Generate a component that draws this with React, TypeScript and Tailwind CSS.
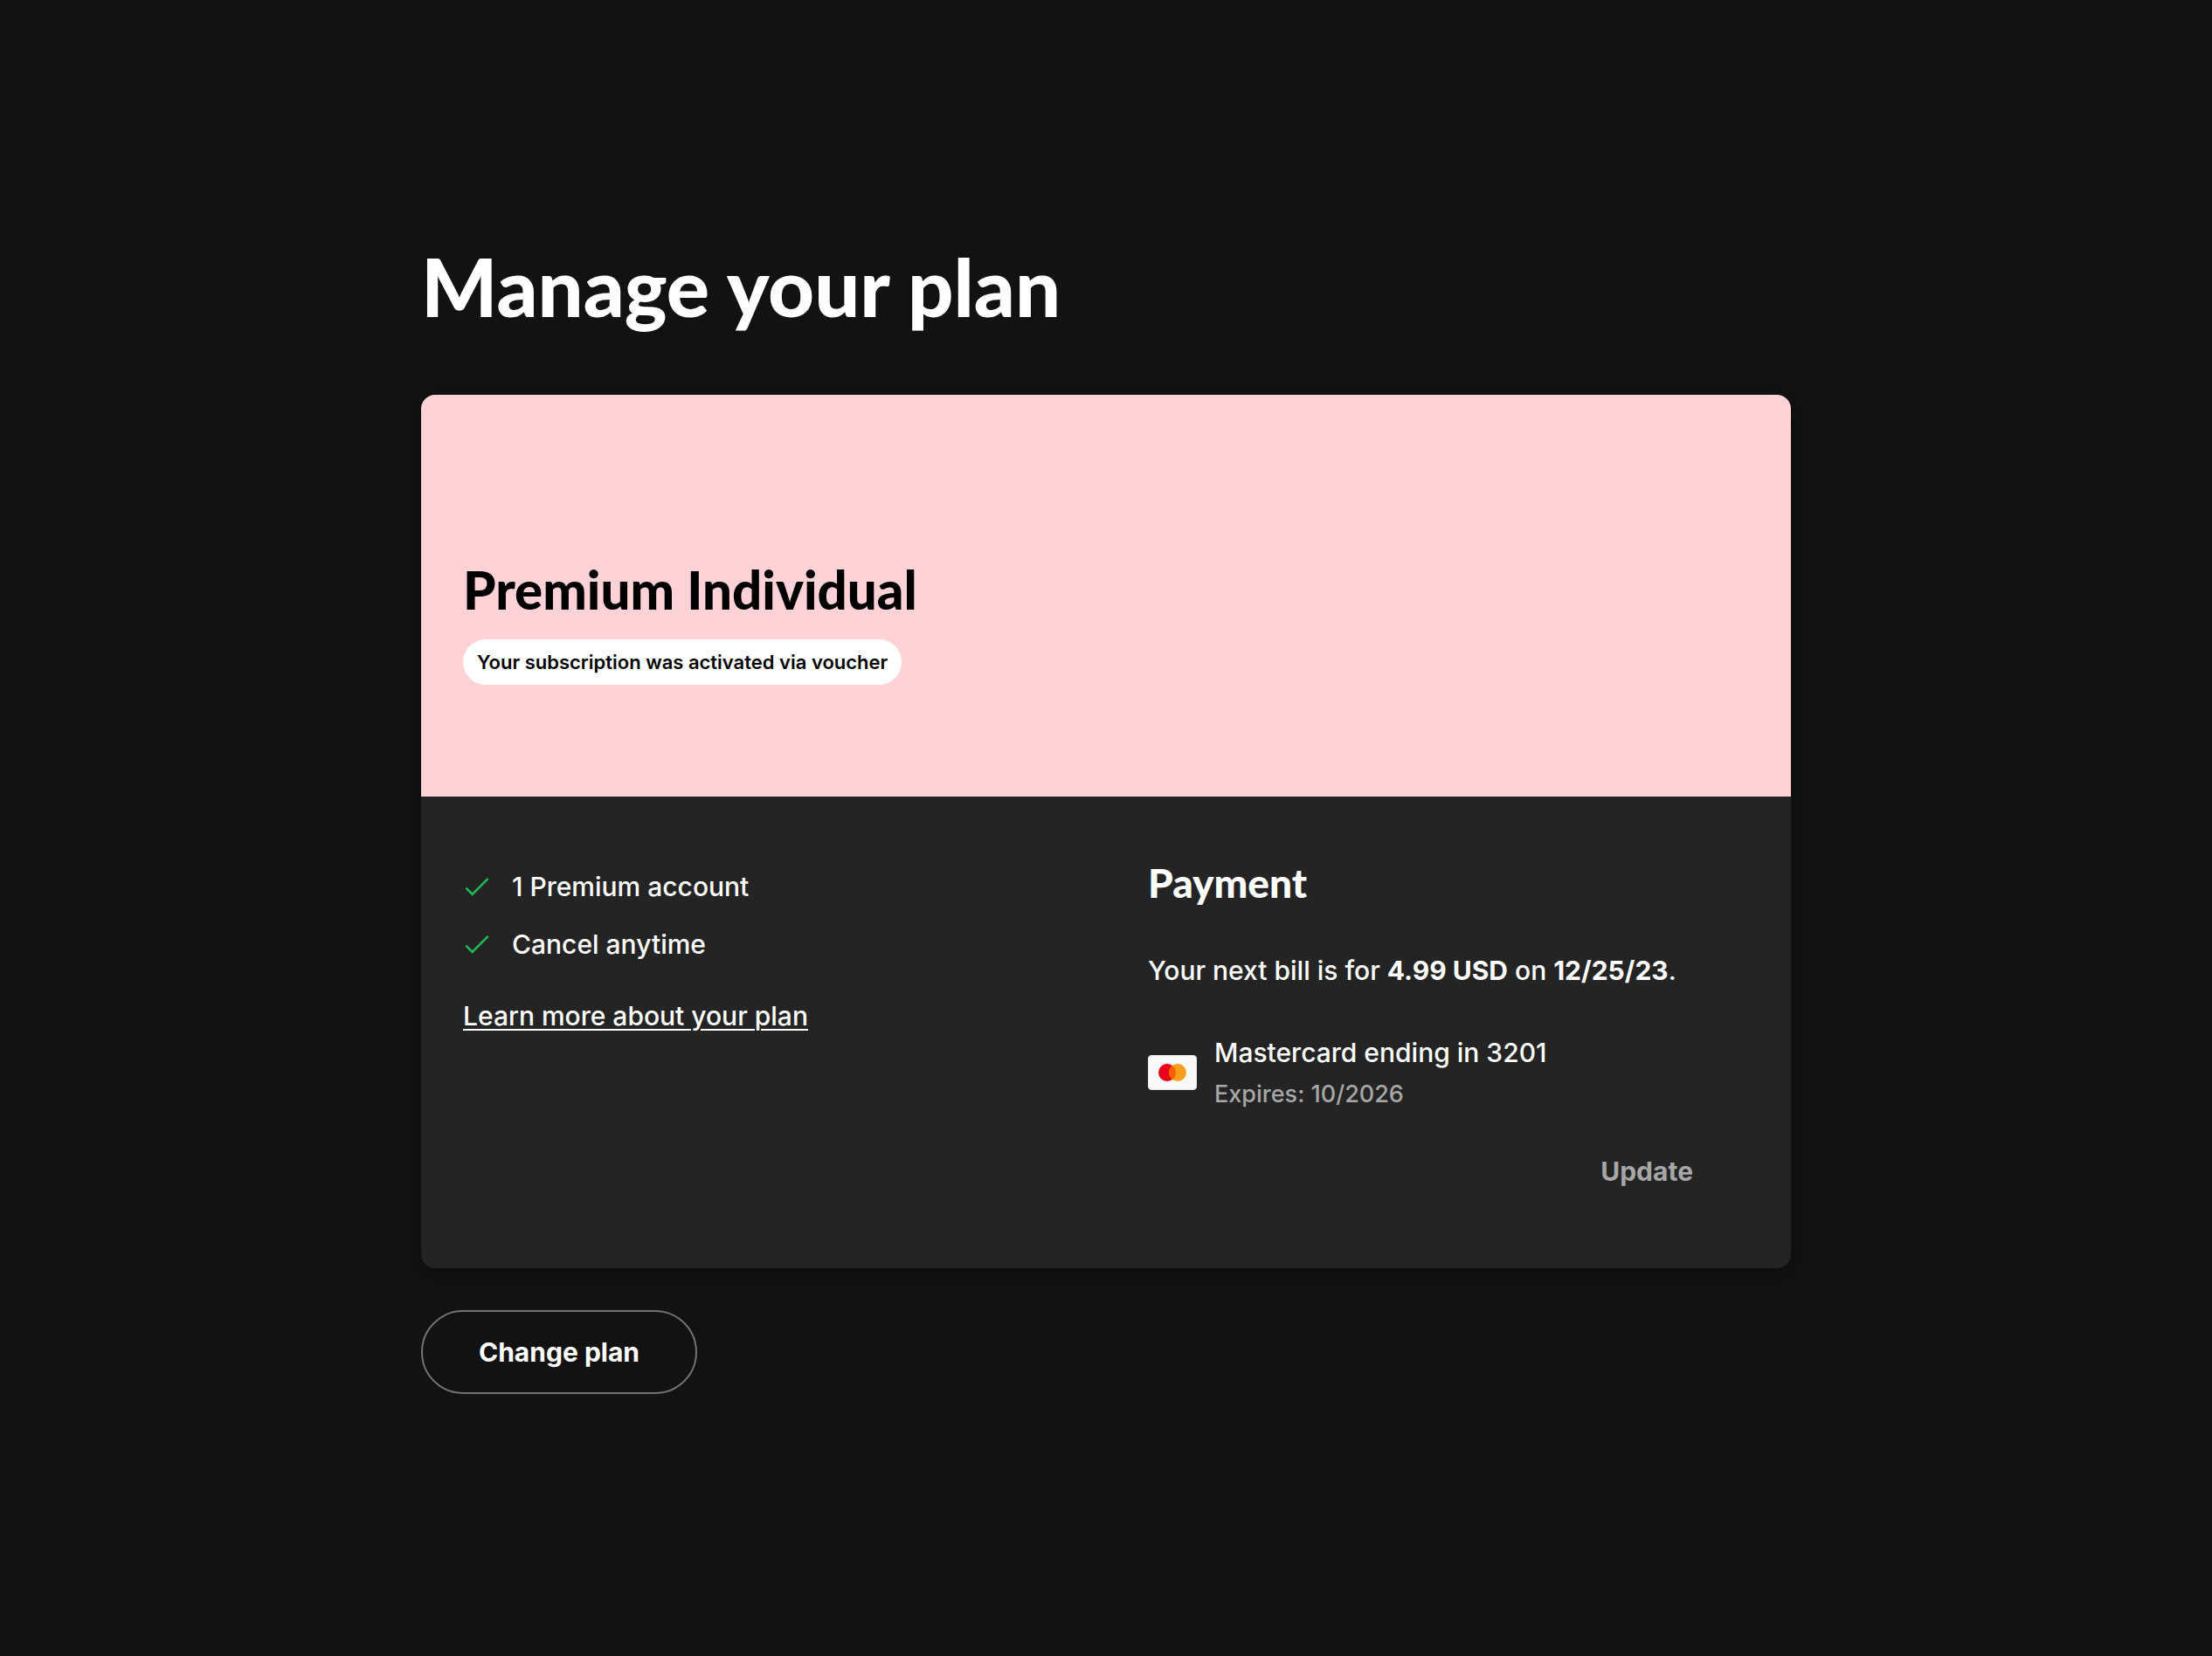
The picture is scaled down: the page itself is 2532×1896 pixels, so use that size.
const features = ['1 Premium account', 'Cancel anytime']

function CheckIcon() {
  return (
    <svg viewBox="0 0 32 32" className="h-8 w-8 shrink-0" fill="none" aria-hidden="true">
      <path d="M3.4 17.6 10.7 24.9 28.7 6.9" stroke="#1fb855" strokeWidth="2.6" />
    </svg>
  )
}

function MastercardIcon() {
  return (
    <svg viewBox="0 0 56 40" className="h-10 w-14 shrink-0" aria-hidden="true">
      <rect x="0.5" y="0.5" width="55" height="39" rx="3.5" fill="#f9f9f9" stroke="#ececec" />
      <circle cx="22" cy="20" r="10" fill="#eb001b" />
      <circle cx="34" cy="20" r="10" fill="#f79e1b" />
      <path d="M28 12a10 10 0 0 1 0 16a10 10 0 0 1 0-16z" fill="#ff5f00" />
    </svg>
  )
}

export default function App() {
  return (
    <div className="min-h-screen bg-[#121212] font-['Inter',sans-serif] text-[30px] leading-12 font-medium text-white">
      <main className="mx-auto max-w-[1568px] pt-[272px] pb-24">
        <h1 className="font-['Lato',sans-serif] text-[92px] leading-[112px] font-black">Manage your plan</h1>

        <section className="mt-17 overflow-hidden rounded-2xl bg-[#242424] shadow-[0_4px_16px_rgba(0,0,0,0.3)]">
          <header className="bg-[#ffd2d7] px-12 pt-[183px] pb-32 text-black">
            <h2 className="font-['Lato',sans-serif] text-[60px] leading-20 font-black">Premium Individual</h2>
            <p className="mt-[17px] w-fit rounded-full bg-white px-4 py-2 text-[22px] leading-9 font-semibold">
              Your subscription was activated via voucher
            </p>
          </header>

          <div className="grid grid-cols-2">
            <div className="px-12 pt-[79px]">
              <ul className="flex flex-col gap-[18px]">
                {features.map(feature => (
                  <li key={feature} className="flex items-center gap-6">
                    <CheckIcon />
                    {feature}
                  </li>
                ))}
              </ul>
              <a href="#plan" className="mt-[34px] inline-block underline decoration-2 underline-offset-4">
                Learn more about your plan
              </a>
            </div>

            <div className="px-12 pt-[69px] pb-[87px]">
              <h3 className="font-['Lato',sans-serif] text-[46px] leading-[60px] font-black">Payment</h3>
              <p className="mt-[46px]">
                Your next bill is for <b>4.99 USD</b> on <b>12/25/23</b>.
              </p>
              <div className="mt-[46px] flex items-center gap-5">
                <MastercardIcon />
                <div>
                  <p>Mastercard ending in 3201</p>
                  <p className="mt-0.5 text-[27px] leading-11 text-[#a7a7a7]">Expires: 10/2026</p>
                </div>
              </div>
              <div className="mt-[42px] flex justify-end pr-16">
                <button type="button" className="cursor-pointer font-bold text-[#a7a7a7]">
                  Update
                </button>
              </div>
            </div>
          </div>
        </section>

        <button
          type="button"
          className="mt-12 cursor-pointer rounded-full border-2 border-[#727272] px-16 py-[22px] font-bold"
        >
          Change plan
        </button>
      </main>
    </div>
  )
}
